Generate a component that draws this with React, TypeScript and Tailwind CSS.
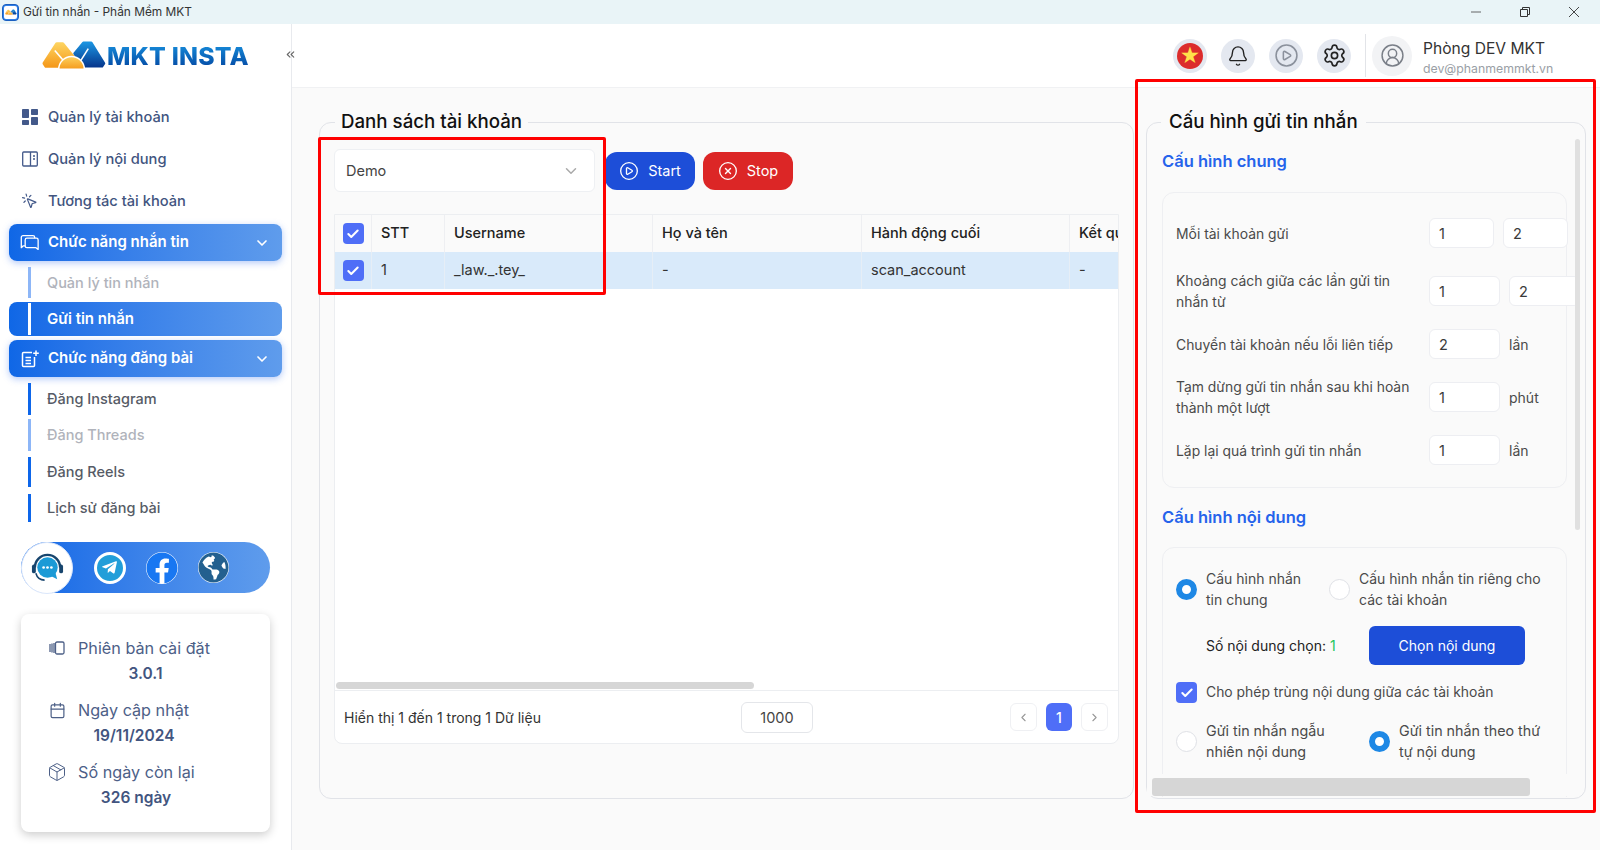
import React from "react";
import { Bell, Calendar, Check, ChevronDown, ChevronLeft, ChevronRight, ChevronsLeft, CirclePlay, CircleUserRound, CircleX, MousePointerClick, Package, Settings } from "lucide-react";
import { FaFacebook, FaGlobeAmericas, FaTelegramPlane } from "react-icons/fa";

function LogoMark({ className }: { className: string }) {
  return (
    <svg viewBox="0 0 66 30" className={className}>
      <defs>
        <linearGradient id="lo" x1="0" y1="0" x2="0" y2="1"><stop offset="0" stopColor="#fdd25e" /><stop offset="1" stopColor="#f59a1c" /></linearGradient>
        <linearGradient id="lb" x1="0" y1="0" x2="0" y2="1"><stop offset="0" stopColor="#1b93e0" /><stop offset="1" stopColor="#07398f" /></linearGradient>
      </defs>
      <path d="M2 24 L15 4 L21 4 L34 20 L34 27 L4 27 Z" fill="url(#lo)" stroke="url(#lo)" strokeWidth="3" strokeLinejoin="round" />
      <path d="M33 14 L42 3 L50 3 L63 24 L61 27 L42 27 Z" fill="url(#lb)" stroke="url(#lb)" strokeWidth="2.5" strokeLinejoin="round" />
      <path d="M13 11 L25 25" stroke="#fff" strokeWidth="1.6" />
      <path d="M47 9 L35 28" stroke="#fff" strokeWidth="1.6" />
      <path d="M17 30 A13 13 0 0 1 43 30 Z" fill="url(#lo)" stroke="#fff" strokeWidth="1.5" />
    </svg>
  );
}

function Check21() {
  return (
    <span className="w-[21px] h-[21px] rounded-[4px] bg-[#4f6ef7] flex items-center justify-center shrink-0">
      <Check className="w-[14px] h-[14px] text-white" strokeWidth={3.5} />
    </span>
  );
}

function Radio({ on }: { on?: boolean }) {
  return on ? (
    <span className="w-[21px] h-[21px] rounded-full border-[6px] border-[#1e88e5] bg-white shrink-0" />
  ) : (
    <span className="w-[21px] h-[21px] rounded-full border border-[#dfe1e6] bg-white shrink-0" />
  );
}

function NavItem({ icon, label }: { icon: React.ReactNode; label: string }) {
  return (
    <div className="h-[42px] flex items-center pl-[21px] gap-[10px] text-[14.7px] font-medium text-[#42557f]">
      <span className="w-[17px] flex justify-center">{icon}</span>
      {label}
    </div>
  );
}

function NavHead({ icon, label }: { icon: React.ReactNode; label: string }) {
  return (
    <div className="mx-[9px] h-[37px] rounded-lg bg-gradient-to-r from-[#0f67e6] to-[#5f9cec] shadow-[0_2px_7px_rgba(37,99,235,0.35)] flex items-center pl-[11px] pr-[12px] gap-[9px] text-[15px] font-semibold text-white">
      <span className="w-[19px] flex justify-center">{icon}</span>
      <span className="flex-1">{label}</span>
      <ChevronDown className="w-[16px] h-[16px]" strokeWidth={2.5} />
    </div>
  );
}

function Sub({ label, muted, h }: { label: string; muted?: boolean; h: string }) {
  return (
    <div className={`ml-[28px] border-l-[3px] pl-[16px] flex items-center text-[14.5px] font-medium ${h} ${muted ? "border-[#8db6f7] text-[#b0b3bb]" : "border-[#0d66ea] text-[#565b66]"}`}>
      {label}
    </div>
  );
}

function InfoLine({ icon, label, value, pad }: { icon: React.ReactNode; label: string; value: string; pad: string }) {
  return (
    <div className="flex flex-col">
      <div className="h-[26px] flex items-center pl-[26px] gap-[11px] text-[16.2px] text-[#4d6087]">
        <span className="w-[20px] flex justify-center">{icon}</span>
        {label}
      </div>
      <div className={`h-[26px] flex items-center justify-center text-[15.5px] font-semibold text-[#42557f] ${pad}`}>{value}</div>
    </div>
  );
}

function HeadIcon({ children }: { children: React.ReactNode }) {
  return <div className="w-[34px] h-[34px] rounded-full bg-[#e4e8f0] flex items-center justify-center">{children}</div>;
}

function Field({ v, w }: { v: string; w: string }) {
  return <input readOnly defaultValue={v} className={`h-[30px] ${w} shrink-0 rounded-md bg-white border border-[#edeef2] pl-[9px] text-[14.5px] text-[#3a3a3a] outline-none`} />;
}

function Row({ label, children, cls }: { label: React.ReactNode; children: React.ReactNode; cls?: string }) {
  return (
    <div className={`flex items-center ${cls ?? ""}`}>
      <div className="w-[253px] shrink-0 pr-[14px] translate-y-[1px] text-[13.9px] leading-[21px] text-[#4a4a4a]">{label}</div>
      {children}
    </div>
  );
}

const Unit = ({ t }: { t: string }) => <span className="text-[14px] text-[#4a4a4a] ml-[9px]">{t}</span>;

const cols = [
  ["STT", "1", "w-[73px]"],
  ["Username", "_law._.tey_", "w-[208px]"],
  ["Họ và tên", "-", "w-[209px]"],
  ["Hành động cuối", "scan_account", "w-[208px]"],
  ["Kết quả", "-", "w-[120px]"],
];

export default function App() {
  return (
    <div className="relative w-[1600px] h-[850px] overflow-hidden flex flex-col bg-white font-['Inter',sans-serif]">
      <div className="h-6 shrink-0 bg-[#e9f4f7] flex items-center">
        <div className="ml-[2px] w-[17px] h-[17px] rounded-[4px] bg-[#2f80e8] border border-[#1b5fc0] flex items-center justify-center">
          <span className="w-[13px] h-[13px] rounded-[2px] bg-white flex items-center justify-center">
            <LogoMark className="w-[12px] h-[6px]" />
          </span>
        </div>
        <span className="ml-[4px] flex-1 text-[11.9px] text-[#333]">Gửi tin nhắn - Phần Mềm MKT</span>
        <svg viewBox="0 0 10 10" className="w-[10px] h-[10px] mr-[39px]"><path d="M0 5H10" stroke="#555" strokeWidth="0.9" /></svg>
        <svg viewBox="0 0 10 10" className="w-[10px] h-[10px] mr-[39px]"><path d="M0.5 2.5H7.5V9.5H0.5ZM2.5 2.5V0.5H9.5V7.5H7.5" fill="none" stroke="#333" strokeWidth="1" /></svg>
        <svg viewBox="0 0 10 10" className="w-[10px] h-[10px] mr-[21px]"><path d="M0 0L10 10M10 0L0 10" stroke="#333" strokeWidth="0.9" /></svg>
      </div>

      <div className="flex-1 flex min-h-0">
        <aside className="w-[292px] shrink-0 bg-white border-r border-[#e8eaee] flex flex-col">
          <div className="h-[72px] shrink-0 flex items-center relative pl-[42px] pb-[15px] pt-[4px]">
            <LogoMark className="w-[65px] h-[31px]" />
            <span className="text-[24.8px] leading-[30px] font-extrabold bg-gradient-to-b from-[#1c95e2] to-[#07409c] bg-clip-text text-transparent tracking-[0.2px] mt-[2px]">MKT INSTA</span>
            <ChevronsLeft className="absolute left-[284px] top-[24px] w-[13px] h-[13px] text-[#666]" />
          </div>
          <NavItem label="Quản lý tài khoản" icon={
            <svg viewBox="0 0 16 16" className="w-[16px] h-[16px]" fill="#43598a"><rect x="0" y="0" width="7" height="9" rx="0.8" /><rect x="9" y="0" width="7" height="6" rx="0.8" /><rect x="0" y="11" width="7" height="5" rx="0.8" /><rect x="9" y="8" width="7" height="8" rx="0.8" /></svg>
          } />
          <NavItem label="Quản lý nội dung" icon={
            <svg viewBox="0 0 16 16" className="w-[16px] h-[16px]" fill="none" stroke="#43598a" strokeWidth="1.3"><rect x="0.7" y="1" width="14.6" height="14" rx="1" /><path d="M8.5 1V15M11 5H13M11 8H13" /></svg>
          } />
          <NavItem label="Tương tác tài khoản" icon={<MousePointerClick className="w-[18px] h-[18px] text-[#43598a]" strokeWidth={1.7} />} />
          <div className="mt-[2px]">
            <NavHead label="Chức năng nhắn tin" icon={
              <svg viewBox="0 0 22 18" className="w-[21px] h-[17px]" fill="none" stroke="#fff" strokeWidth="1.5" strokeLinejoin="round"><path d="M6 13H3.5L1.5 15V3A2 2 0 0 1 3.5 1H15A2 2 0 0 1 17 3V4" /><path d="M8 4H19A2 2 0 0 1 21 6V17L18.5 15H8A2 2 0 0 1 6 13V6A2 2 0 0 1 8 4Z" /></svg>
            } />
          </div>
          <div className="mt-[6px]"><Sub label="Quản lý tin nhắn" muted h="h-[31px]" /></div>
          <div className="mt-[4px] mx-[9px] h-[34px] rounded-lg bg-gradient-to-r from-[#0f67e6] to-[#5f9cec] flex items-stretch py-[1px] pl-[19px] text-[15px] font-semibold text-white">
            <span className="w-[3px] bg-white" />
            <span className="pl-[16px] flex items-center">Gửi tin nhắn</span>
          </div>
          <div className="mt-[4px]">
            <NavHead label="Chức năng đăng bài" icon={
              <svg viewBox="0 0 18 18" className="w-[18px] h-[18px]" fill="none" stroke="#fff" strokeWidth="1.5"><path d="M11 2.5H2.5A1 1 0 0 0 1.5 3.5V15.5A1 1 0 0 0 2.5 16.5H12.5A1 1 0 0 0 13.5 15.5V7M4.5 7.5H10M4.5 10.5H10M4.5 13.5H10M15 0.5V6M12.2 3.2H17.8" /></svg>
            } />
          </div>
          <div className="mt-[6px]"><Sub label="Đăng Instagram" h="h-[32px]" /></div>
          <div className="mt-[4px]"><Sub label="Đăng Threads" muted h="h-[32px]" /></div>
          <div className="mt-[6px]"><Sub label="Đăng Reels" h="h-[30px]" /></div>
          <div className="mt-[7px]"><Sub label="Lịch sử đăng bài" h="h-[28px]" /></div>

          <div className="mt-[20px] ml-[21px] w-[249px] h-[51px] rounded-full bg-gradient-to-r from-[#0f67e6] to-[#5f9cec] flex items-center">
            <div className="w-[52px] h-[52px] rounded-full bg-white border border-[#dbe7fb] flex items-center justify-center shrink-0">
              <svg viewBox="0 0 36 36" className="w-[35px] h-[35px]">
                <path d="M5 18A13 13 0 0 1 31 18" fill="none" stroke="#17456e" strokeWidth="2.5" />
                <rect x="2" y="15" width="4" height="9" rx="2" fill="#17456e" />
                <rect x="30" y="15" width="4" height="9" rx="2" fill="#17456e" />
                <path d="M6 24Q8 31 15 31" fill="none" stroke="#17456e" strokeWidth="1.6" />
                <circle cx="18" cy="18" r="10.5" fill="#1b9ad6" />
                <path d="M22 27L28 30L26 23Z" fill="#1b9ad6" />
                <circle cx="14" cy="18" r="1.4" fill="#fff" /><circle cx="18" cy="18" r="1.4" fill="#fff" /><circle cx="22" cy="18" r="1.4" fill="#fff" />
              </svg>
            </div>
            <div className="ml-[21px] w-[32px] h-[32px] rounded-full bg-[#229ed9] border-[3px] border-white flex items-center justify-center">
              <FaTelegramPlane className="w-[17px] h-[17px] text-white -ml-[2px]" />
            </div>
            <div className="ml-[20px] w-[32px] h-[32px] rounded-full bg-white flex items-center justify-center">
              <FaFacebook className="w-[32px] h-[32px] text-[#1877f2]" />
            </div>
            <div className="ml-[20px] w-[31px] h-[31px] rounded-full bg-white flex items-center justify-center">
              <FaGlobeAmericas className="w-[31px] h-[31px] text-[#23608f]" />
            </div>
          </div>

          <div className="mt-[21px] ml-[21px] w-[249px] h-[218px] rounded-lg bg-white shadow-[0_3px_10px_rgba(0,0,0,0.2)] flex flex-col gap-[10px] pt-[21px]">
            <InfoLine label="Phiên bản cài đặt" value="3.0.1" pad="" icon={
              <svg viewBox="0 0 16 14" className="w-[16px] h-[14px]" fill="none" stroke="#4d6087" strokeWidth="1.3"><rect x="6.5" y="1" width="8.5" height="12" rx="1.5" /><path d="M1 3V11M3 2.5V11.5M5 2V12" /></svg>
            } />
            <InfoLine label="Ngày cập nhật" value="19/11/2024" pad="pr-[23px]" icon={<Calendar className="w-[17px] h-[17px] text-[#4d6087]" strokeWidth={1.7} />} />
            <InfoLine label="Số ngày còn lại" value="326 ngày" pad="pr-[19px]" icon={<Package className="w-[20px] h-[20px] text-[#4d6087]" strokeWidth={1.2} />} />
          </div>
        </aside>

        <main className="flex-1 min-w-0 flex flex-col bg-[#fafafa]">
          <header className="h-16 shrink-0 bg-white border-b border-[#f0f1f3] flex items-center justify-end pr-[47px]">
            <HeadIcon>
              <span className="w-[26px] h-[26px] rounded-full bg-[#dc2c2c] flex items-center justify-center text-[#ffe14a] text-[20px] leading-none">★</span>
            </HeadIcon>
            <div className="ml-[14px]"><HeadIcon><Bell className="w-[22px] h-[22px] text-[#222]" strokeWidth={1.5} /></HeadIcon></div>
            <div className="ml-[14px]"><HeadIcon><CirclePlay className="w-[25px] h-[25px] text-[#8b919c]" strokeWidth={1.5} /></HeadIcon></div>
            <div className="ml-[14px]"><HeadIcon><Settings className="w-[25px] h-[25px] text-[#222]" strokeWidth={1.6} /></HeadIcon></div>
            <div className="ml-[14px] w-px h-[43px] bg-[#e2e4e8]" />
            <div className="ml-[6px] w-[40px] h-[40px] rounded-full bg-[#f2f3f5] flex items-center justify-center">
              <CircleUserRound className="w-[25px] h-[25px] text-[#7a7f88]" strokeWidth={1.4} />
            </div>
            <div className="ml-[11px] w-[130px] flex flex-col pt-[4px]">
              <span className="text-[15.6px] leading-[22px] text-[#333]">Phòng DEV MKT</span>
              <span className="text-[12.3px] leading-[18px] text-[#9aa0a6]">dev@phanmemmkt.vn</span>
            </div>
          </header>

          <div className="flex-1 min-h-0 flex items-start gap-[12px] pl-[27px] pt-[20px]">
            <fieldset className="w-[814px] h-[691px] shrink-0 border border-[#e1e3e8] rounded-xl px-[14px]">
              <legend className="ml-[1px] px-[6px] h-[28px] flex items-center text-[18.7px] font-medium text-[#111]">Danh sách tài khoản</legend>
              <div className="mt-[13px] flex items-center h-[43px]">
                <div className="w-[261px] h-[43px] bg-white border border-[#eef0f3] rounded-md flex items-center pl-[11px] pr-[14px] text-[14.5px] text-[#444]">
                  <span className="flex-1">Demo</span>
                  <ChevronDown className="w-[18px] h-[18px] text-[#aaa]" />
                </div>
                <button className="ml-[10px] w-[90px] h-[38px] rounded-xl bg-[#1d4ed8] text-white text-[14.5px] flex items-center justify-center gap-[9px]">
                  <CirclePlay className="w-[20px] h-[20px]" strokeWidth={1.6} /> Start
                </button>
                <button className="ml-[8px] w-[90px] h-[38px] rounded-xl bg-[#dc2626] text-white text-[14.5px] flex items-center justify-center gap-[9px]">
                  <CircleX className="w-[20px] h-[20px]" strokeWidth={1.6} /> Stop
                </button>
              </div>
              <div className="mt-[22px] w-[785px] h-[530px] bg-white border border-[#eceef1] rounded-b-lg flex flex-col overflow-hidden">
                <div className="flex h-[37px] shrink-0 bg-[#fafafa] text-[14.5px] font-medium text-[#222]">
                  <div className="w-[37px] shrink-0 flex items-center justify-center border-r border-[#eeeff2]"><Check21 /></div>
                  {cols.map((c) => (
                    <div key={c[0]} className={`${c[2]} shrink-0 flex items-center pl-[9px] pb-[2px] border-r border-[#eeeff2] whitespace-nowrap`}>{c[0]}</div>
                  ))}
                </div>
                <div className="flex h-[37px] shrink-0 bg-[#d9eafa] text-[14.5px] text-[#333]">
                  <div className="w-[37px] shrink-0 flex items-center justify-center border-r border-[#e6eef6]"><Check21 /></div>
                  {cols.map((c) => (
                    <div key={c[0]} className={`${c[2]} shrink-0 flex items-center pl-[9px] pb-[2px] border-r border-[#e6eef6] whitespace-nowrap`}>{c[1]}</div>
                  ))}
                </div>
                <div className="flex-1 flex flex-col justify-end">
                  <div className="ml-[1px] mb-[1px] w-[418px] h-[7px] rounded-full bg-[#d6d6d6]" />
                </div>
                <div className="h-[53px] shrink-0 border-t border-[#eceef1] flex items-center pl-[9px] pr-[10px]">
                  <span className="w-[397px] text-[14px] text-[#333]">Hiển thị 1 đến 1 trong 1 Dữ liệu</span>
                  <div className="w-[72px] h-[31px] border border-[#e4e6ea] rounded-md flex items-center justify-center pt-[2px] text-[14.5px] text-[#444]">1000</div>
                  <div className="flex-1 flex justify-end gap-[9px]">
                    <span className="w-[27px] h-[28px] border border-[#eff0f3] rounded-md flex items-center justify-center"><ChevronLeft className="w-[13px] h-[13px] text-[#999]" /></span>
                    <span className="w-[26px] h-[28px] bg-[#4f6ef7] rounded-md flex items-center justify-center text-[14px] font-medium text-white">1</span>
                    <span className="w-[27px] h-[28px] border border-[#eff0f3] rounded-md flex items-center justify-center"><ChevronRight className="w-[13px] h-[13px] text-[#999]" /></span>
                  </div>
                </div>
              </div>
            </fieldset>

            <fieldset className="relative w-[440px] h-[691px] shrink-0 border border-[#e1e3e8] rounded-xl">
              <legend className="ml-[14px] px-[8px] h-[28px] flex items-center text-[18.7px] font-medium text-[#111]">Cấu hình gửi tin nhắn</legend>
              <div className="w-[429px] h-[661px] overflow-hidden pl-[15px] pt-[12px]">
                <div className="h-[26px] flex items-center text-[16.5px] font-semibold text-[#2563eb]">Cấu hình chung</div>
                <div className="mt-[18px] w-[405px] border border-[#eeeff2] rounded-xl pt-[25px] pb-[22px] pl-[13px] flex flex-col gap-[17px]">
                  <Row label="Mỗi tài khoản gửi" cls="mb-[5px]">
                    <Field v="1" w="w-[65px]" />
                    <div className="ml-[9px]"><Field v="2" w="w-[65px]" /></div>
                  </Row>
                  <Row label="Khoảng cách giữa các lần gửi tin nhắn từ">
                    <Field v="1" w="w-[71px]" />
                    <div className="ml-[9px]"><Field v="2" w="w-[71px]" /></div>
                  </Row>
                  <Row label="Chuyển tài khoản nếu lỗi liên tiếp">
                    <Field v="2" w="w-[71px]" />
                    <Unit t="lần" />
                  </Row>
                  <Row label="Tạm dừng gửi tin nhắn sau khi hoàn thành một lượt">
                    <Field v="1" w="w-[71px]" />
                    <Unit t="phút" />
                  </Row>
                  <Row label="Lặp lại quá trình gửi tin nhắn">
                    <Field v="1" w="w-[71px]" />
                    <Unit t="lần" />
                  </Row>
                </div>
                <div className="mt-[16px] h-[26px] flex items-center text-[16.5px] font-semibold text-[#2563eb]">Cấu hình nội dung</div>
                <div className="mt-[17px] w-[405px] h-[400px] border border-[#eeeff2] rounded-xl pt-[20px] pl-[13px] text-[14px] leading-[21px] text-[#4a4a4a]">
                  <div className="flex items-center">
                    <Radio on />
                    <span className="ml-[9px] w-[123px] shrink-0 pr-[20px]">Cấu hình nhắn tin chung</span>
                    <Radio />
                    <span className="ml-[9px] w-[190px]">Cấu hình nhắn tin riêng cho các tài khoản</span>
                  </div>
                  <div className="mt-[16px] ml-[30px] flex items-center">
                    <span className="w-[163px] text-[#222]">Số nội dung chọn: <span className="text-[#22c55e]">1</span></span>
                    <button className="w-[156px] h-[39px] rounded-md bg-[#1d4ed8] text-white text-[14px]">Chọn nội dung</button>
                  </div>
                  <div className="mt-[17px] flex items-center">
                    <Check21 />
                    <span className="ml-[9px] text-[13.9px]">Cho phép trùng nội dung giữa các tài khoản</span>
                  </div>
                  <div className="mt-[17px] flex items-center text-[14.3px]">
                    <Radio />
                    <span className="ml-[9px] w-[163px] shrink-0 pr-[30px]">Gửi tin nhắn ngẫu nhiên nội dung</span>
                    <Radio on />
                    <span className="ml-[9px] w-[150px]">Gửi tin nhắn theo thứ tự nội dung</span>
                  </div>
                </div>
              </div>
              <div className="absolute left-[428px] top-[3px] w-[5px] h-[391px] rounded-full bg-[#e0e0e0]" />
              <div className="absolute left-0 bottom-[2px] w-[430px] h-[22px] bg-[#fafafa]">
                <div className="absolute left-[5px] bottom-0 w-[378px] h-[18px] rounded-[3px] bg-[#d6d6d6]" />
              </div>
            </fieldset>
          </div>
        </main>
      </div>

      <div className="absolute left-[318px] top-[137px] w-[288px] h-[158px] border-[3px] border-[#ff0000] rounded-[2px]" />
      <div className="absolute left-[1135px] top-[79px] w-[461px] h-[734px] border-[3px] border-[#ff0000] rounded-[2px]" />
    </div>
  );
}
